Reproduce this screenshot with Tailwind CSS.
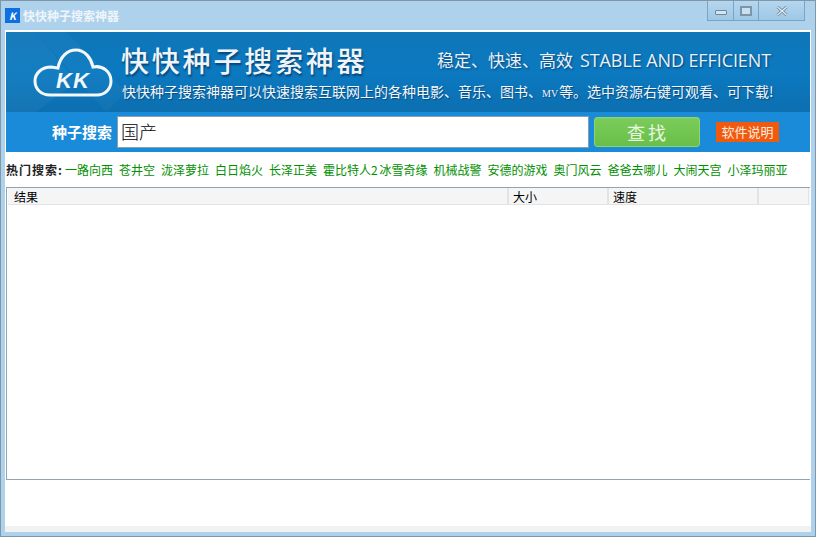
<!DOCTYPE html>
<html lang="zh-CN">
<head>
  <meta charset="UTF-8" />
  <title>快快种子搜索神器</title>
  <script src="https://cdn.jsdelivr.net/npm/@tailwindcss/browser@4"></script>
</head>
<body class="bg-white overflow-hidden font-['Noto_Sans_CJK_SC','Liberation_Sans',sans-serif]">
  <div class="w-[816px] h-[537px] flex flex-col bg-[#aed2ec] border border-[#7f97a8] overflow-hidden">
    <!-- title bar -->
    <header class="h-[29px] shrink-0 flex items-start justify-between pl-[4px] pr-[10px]">
      <div class="flex items-center gap-[3px] pt-[7px]">
        <div class="w-[15px] h-[15px] bg-[#0d6fe0] flex items-center justify-center text-white text-[10px] leading-none font-bold italic">K</div>
        <span class="text-[12px] leading-[15px] font-bold text-[#eef5fb]">快快种子搜索神器</span>
      </div>
      <div class="flex h-[20px] border border-t-0 border-[#7fa3bd] bg-linear-to-b from-[#b6d6ee] to-[#9dc8e8]">
        <button class="w-[26px] border-r border-[#7fa3bd] flex items-center justify-center">
          <span class="w-[12px] h-[5px] mt-[3px] border border-[#6f8899] bg-[#d5e5f0] rounded-[1px]"></span>
        </button>
        <button class="w-[25px] border-r border-[#7fa3bd] flex items-center justify-center">
          <span class="w-[12px] h-[10px] border-2 border-[#7c96a8] bg-[#c9e0f0]"></span>
        </button>
        <button class="w-[45px] flex items-center justify-center">
          <svg width="12" height="10" viewBox="0 0 12 10"><path d="M1.5 1 L10.5 9 M10.5 1 L1.5 9" stroke="#6f8899" stroke-width="3"/><path d="M1.5 1 L10.5 9 M10.5 1 L1.5 9" stroke="#e4eef5" stroke-width="1.2"/></svg>
        </button>
      </div>
    </header>

    <div class="flex-1 flex flex-col ml-[4px] mr-[4px] bg-white">
      <div class="flex-1 flex flex-col pt-[2px] pl-[1px]">
        <!-- banner -->
        <section class="relative h-[80px] mr-[1px] shrink-0 overflow-hidden bg-linear-to-b from-[#0f76b8] via-[#0b79c0] to-[#0c6fb0] text-white">
          <svg class="absolute left-0 top-0" width="200" height="80" viewBox="0 0 200 80">
            <path d="M0 0 L30 0 L70 50 L30 80 L0 80 Z" fill="#ffffff" opacity="0.04"/>
            <path d="M30 0 L60 0 L120 60 L100 80 Z" fill="#ffffff" opacity="0.03"/>
          </svg>
          <div class="relative flex h-full">
            <svg class="ml-[27px] mt-[15px] shrink-0" width="80" height="50" viewBox="0 0 80 50">
              <path d="M17 48 C8 48 2 42 2 34 C2 26 9 20 18 20 L25 21 C27 10 34 3 43 3 C52 3 58 11 60 20 C70 18 78 25 78 34 C78 42 72 48 64 48 Z" fill="none" stroke="#f2f8fc" stroke-width="3"/>
              <text x="40" y="41" text-anchor="middle" font-size="22" font-weight="700" font-style="italic" letter-spacing="1" fill="#f2f8fc" font-family="Liberation Sans, sans-serif">KK</text>
            </svg>
            <div class="ml-[8px] flex-1">
              <div class="flex items-start h-[48px]">
                <h1 class="w-[316px] mt-[9px] text-[28px] leading-[38px] font-medium tracking-[2.8px] whitespace-nowrap [text-shadow:1px_2px_2px_rgba(0,30,70,0.6)] text-[#eef4f8]">快快种子搜索神器</h1>
                <p class="mt-[16px] text-[17px] leading-[24px] whitespace-nowrap text-[#e8f2f8] [text-shadow:1px_1px_2px_rgba(0,30,70,0.6)]">稳定、快速、高效<span class="ml-[7px] text-[18px] tracking-[-0.1px] font-['Open_Sans',sans-serif]">STABLE AND EFFICIENT</span></p>
              </div>
              <p class="ml-[1px] mt-[1px] text-[14px] leading-[20px] whitespace-nowrap text-[#f2f8fc] [text-shadow:1px_1px_1px_rgba(0,30,70,0.5)]">快快种子搜索神器可以快速搜索互联网上的各种电影、音乐、图书、<span class="text-[10px] font-['Liberation_Serif',serif] mr-[1px]">MV</span>等。选中资源右键可观看、可下载!</p>
            </div>
          </div>
        </section>

        <!-- search bar -->
        <section class="h-[40px] mr-[1px] shrink-0 flex items-center bg-[#198bd8]">
          <label class="ml-[46px] w-[65px] text-[15px] font-bold text-white whitespace-nowrap">种子搜索</label>
          <div class="w-[472px] h-[32px] bg-white border border-[#8a9fb0] pl-[3px] text-[18px] leading-[28px] font-light text-black">国产</div>
          <button class="ml-[5px] w-[106px] h-[30px] pl-[2px] rounded-[3px] border border-[#8fd46c] bg-linear-to-b from-[#7bcc5a] to-[#68bf49] text-[18px] leading-none tracking-[3px] text-[#e9f6e2]">查找</button>
          <span class="ml-[16px] w-[63px] h-[20px] bg-[#f15a0e] text-center text-[13px] leading-[20px] text-[#fdeee0]">软件说明</span>
        </section>

        <!-- hot searches -->
        <nav class="h-[35px] shrink-0 flex items-center gap-[6px] text-[12px] text-[#009000] whitespace-nowrap">
          <b class="w-[56px] text-[#222222] -mr-[3px] tracking-[1px]">热门搜索:</b>
          <a>一路向西</a>
          <a>苍井空</a>
          <a>泷泽萝拉</a>
          <a>白日焰火</a>
          <a>长泽正美</a>
          <a>霍比特人<span class="-mr-[1px]">2</span> 冰雪奇缘</a>
          <a>机械战警</a>
          <a>安德的游戏</a>
          <a>奥门风云</a>
          <a>爸爸去哪儿</a>
          <a>大闹天宫</a>
          <a>小泽玛丽亚</a>
        </nav>

        <!-- result list -->
        <section class="h-[293px] mr-[1px] shrink-0 border border-r-0 border-[#8fa5b5] pl-[1px]">
          <div class="h-[17px] flex bg-[#f5f5f5] border-b border-[#e3e3e3] text-[12px] leading-[17px] text-black">
            <div class="w-[501px] pl-[6px] border-r-2 border-[#e3e3e3]">结果</div>
            <div class="w-[100px] pl-[4px] border-r-2 border-[#e3e3e3]">大小</div>
            <div class="w-[150px] pl-[4px] border-r-2 border-[#e3e3e3]">速度</div>
            <div class="w-[50px] border-r border-[#e3e3e3]"></div>
          </div>
        </section>

        <div class="flex-1"></div>
      </div>
      <div class="h-[6px] shrink-0 bg-[#f2f2f2]"></div>
    </div>
    <div class="h-[4px] shrink-0"></div>
  </div>
</body>
</html>
